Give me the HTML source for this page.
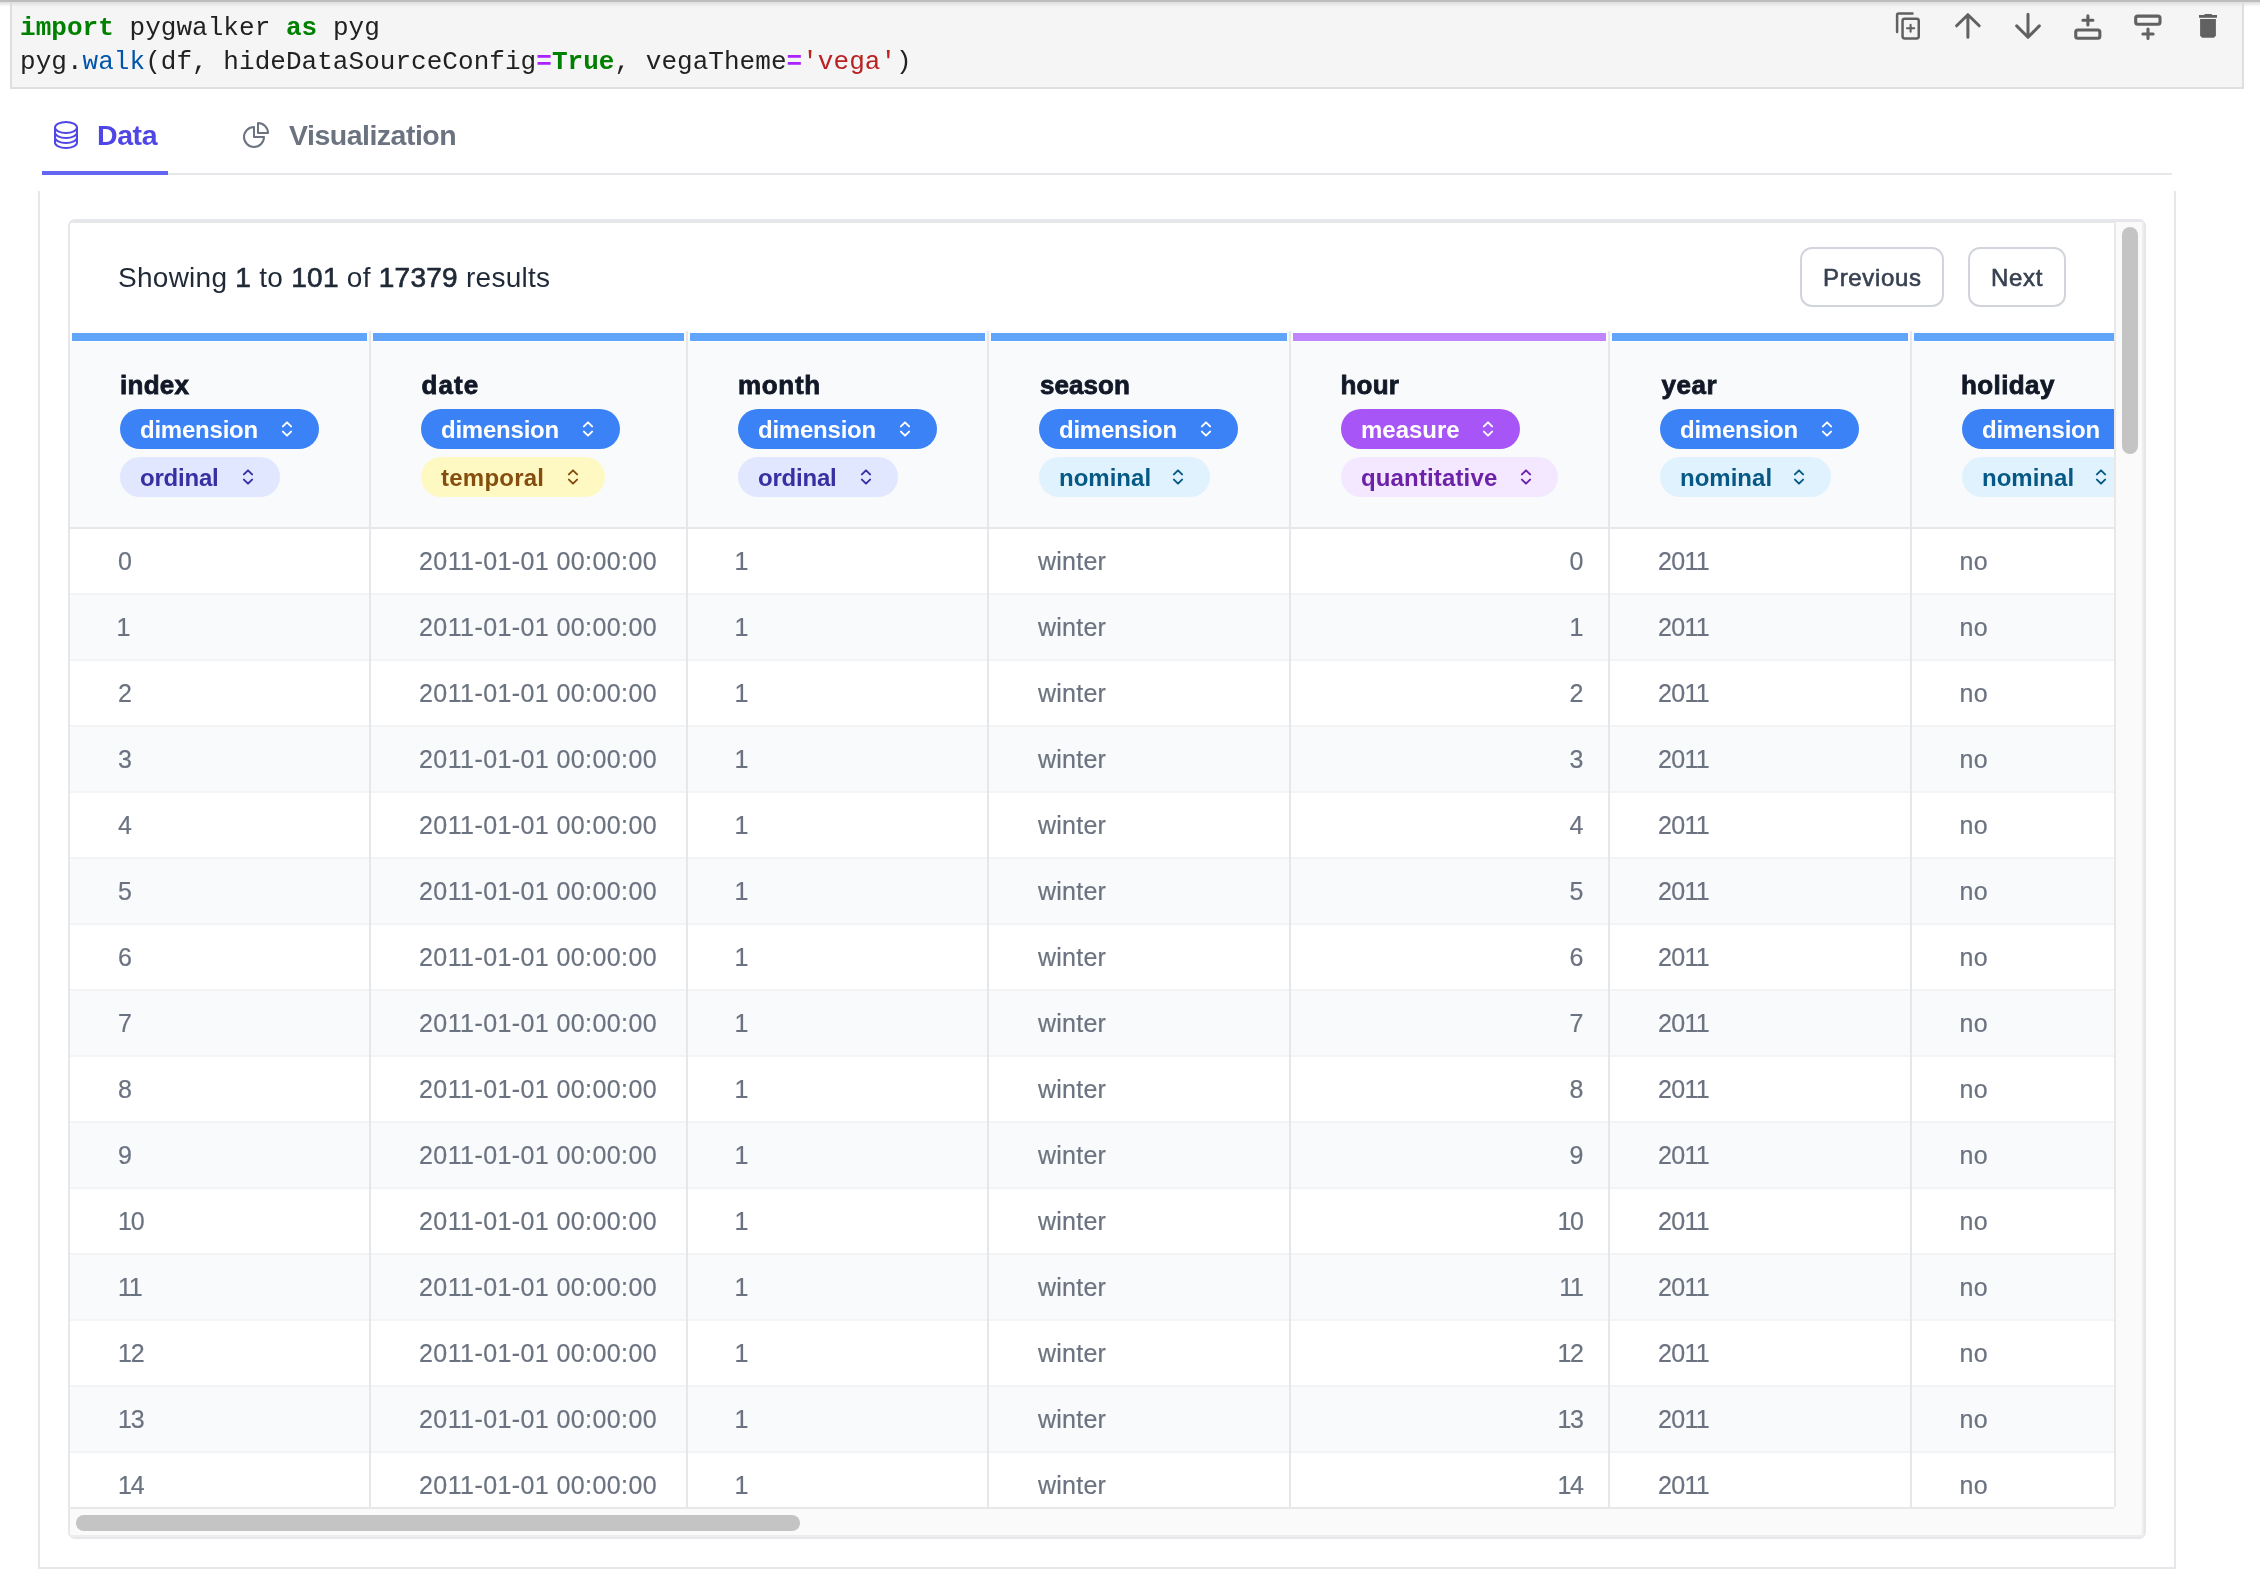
<!DOCTYPE html>
<html><head><meta charset="utf-8"><style>
html,body{margin:0;padding:0;background:#fff;width:2260px;height:1590px;overflow:hidden;position:relative;-webkit-font-smoothing:antialiased}
b{font-weight:normal;-webkit-text-stroke:0.7px #1f2937}
</style></head><body>
<div style="position:absolute;left:0;top:0;width:2260px;height:1590px;will-change:transform"><div style="position:absolute;left:0px;top:0px;width:2260px;height:2px;background:#bdbdbd"></div><div style="position:absolute;left:10px;top:2px;width:2234px;height:87px;background:#f5f5f5;border-left:2px solid #e0dee0;border-right:2px solid #e0dee0;border-bottom:2px solid #e0dee0;box-sizing:border-box"></div><div style="position:absolute;left:0px;top:2px;width:2260px;height:5px;background:linear-gradient(#dedede,rgba(255,255,255,0))"></div><div style="position:absolute;left:20px;top:15.07px;font-family:'Liberation Mono', monospace;font-size:26px;line-height:26px;color:#212121;font-weight:normal;white-space:pre;letter-spacing:0.04px"><span style="color:#008000;font-weight:bold">import</span> pygwalker <span style="color:#008000;font-weight:bold">as</span> pyg</div><div style="position:absolute;left:20px;top:48.77px;font-family:'Liberation Mono', monospace;font-size:26px;line-height:26px;color:#212121;font-weight:normal;white-space:pre;letter-spacing:0.04px">pyg.<span style="color:#0055aa">walk</span>(df, hideDataSourceConfig<span style="color:#aa22ff;font-weight:bold">=</span><span style="color:#008000;font-weight:bold">True</span>, vegaTheme<span style="color:#aa22ff;font-weight:bold">=</span><span style="color:#ba2121">'vega'</span>)</div><svg style="position:absolute;left:1892px;top:10px" width="32" height="32" viewBox="0 0 32 32"><g fill="none" stroke="#616161" stroke-width="2.5" stroke-linecap="round" stroke-linejoin="round"><path d="M5.1 22V5 Q5.1 3.4 6.7 3.4H20.5"/><rect x="10.55" y="8.85" width="16.2" height="19.6" rx="2.2"/><path d="M18.6 14.9v6.8M15 18.2h7.2" stroke-width="2.1"/></g></svg><svg style="position:absolute;left:1952px;top:10px" width="32" height="32" viewBox="0 0 32 32"><g fill="none" stroke="#616161" stroke-width="3" stroke-linecap="round" stroke-linejoin="round"><path d="M15.9 27.2V5.5M4.6 15.8L15.9 4.7l11.3 11.1"/></g></svg><svg style="position:absolute;left:2012px;top:10px" width="32" height="32" viewBox="0 0 32 32"><g fill="none" stroke="#616161" stroke-width="3" stroke-linecap="round" stroke-linejoin="round"><path d="M16 4.3V26.5M4.7 15.9L16 27.3l11.3-11.4"/></g></svg><svg style="position:absolute;left:2072px;top:10px" width="32" height="32" viewBox="0 0 32 32"><g fill="none" stroke="#616161" stroke-width="3.1" stroke-linecap="round"><rect x="3.75" y="20" width="24.1" height="8.2" rx="2"/><path d="M15.9 5.7v9.3M10.9 10.3h10"/></g></svg><svg style="position:absolute;left:2132px;top:10px" width="32" height="32" viewBox="0 0 32 32"><g fill="none" stroke="#616161" stroke-width="3.1" stroke-linecap="round"><rect x="3.7" y="6.1" width="24.3" height="8.2" rx="2"/><path d="M16 19v9.5M10.9 24h10.2"/></g></svg><svg style="position:absolute;left:2192px;top:10px" width="32" height="32" viewBox="0 0 32 32"><g fill="#616161"><rect x="7" y="5" width="18" height="2.8"/><rect x="12.4" y="4" width="7.5" height="1.5" rx="0.5"/><path d="M8.1 9.1h15.8v16.6l-2 2H10.1l-2-2z"/></g></svg><div style="position:absolute;left:42px;top:173px;width:2130px;height:2px;background:#e5e7eb"></div><div style="position:absolute;left:42px;top:171px;width:126px;height:4px;background:#6366f1"></div><svg style="position:absolute;left:50px;top:119px" width="32" height="32" viewBox="0 0 24 24"><path fill="none" stroke="#4f46e5" stroke-width="1.5" stroke-linecap="round" stroke-linejoin="round" d="M20.25 6.375c0 2.278-3.694 4.125-8.25 4.125S3.75 8.653 3.75 6.375m16.5 0c0-2.278-3.694-4.125-8.25-4.125S3.75 4.097 3.75 6.375m16.5 0v11.25c0 2.278-3.694 4.125-8.25 4.125s-8.25-1.847-8.25-4.125V6.375m16.5 0v3.75m-16.5-3.75v3.75m16.5 0v3.75C20.25 16.153 16.556 18 12 18s-8.25-1.847-8.25-4.125v-3.75m16.5 0c0 2.278-3.694 4.125-8.25 4.125s-8.25-1.847-8.25-4.125"/></svg><div style="position:absolute;left:97px;top:121.33px;font-family:'Liberation Sans', sans-serif;font-size:28.5px;line-height:28.5px;color:#4f46e5;font-weight:bold;white-space:pre;letter-spacing:-0.43px">Data</div><svg style="position:absolute;left:240px;top:119px" width="32" height="32" viewBox="0 0 24 24"><g fill="none" stroke="#6b7280" stroke-width="1.5" stroke-linecap="round" stroke-linejoin="round"><path d="M10.5 6a7.5 7.5 0 107.5 7.5h-7.5V6z"/><path d="M13.5 10.5H21A7.5 7.5 0 0013.5 3v7.5z"/></g></svg><div style="position:absolute;left:289px;top:121.33px;font-family:'Liberation Sans', sans-serif;font-size:28.5px;line-height:28.5px;color:#6b7280;font-weight:bold;white-space:pre;letter-spacing:-0.5px">Visualization</div><div style="position:absolute;left:38px;top:191px;width:2138px;height:1378px;border-left:2px solid #e5e7eb;border-right:2px solid #e5e7eb;border-bottom:2px solid #e5e7eb;box-sizing:border-box"></div><div style="position:absolute;left:68px;top:219px;width:2078px;height:1320px;border:2px solid #e5e7eb;border-radius:7px;box-sizing:border-box;background:#fff"></div><div style="position:absolute;left:70px;top:221px;width:2074px;height:2px;background:#e5e7eb"></div><div style="position:absolute;left:118px;top:263.75px;font-family:'Liberation Sans', sans-serif;font-size:28px;line-height:28px;color:#1f2937;font-weight:normal;white-space:pre;letter-spacing:0.27px">Showing <b>1</b> to <b>101</b> of <b>17379</b> results</div><div style="position:absolute;left:1800px;top:247px;width:144px;height:60px;border:2px solid #d1d5db;border-radius:12px;box-sizing:border-box"></div><div style="position:absolute;left:1823px;top:266.07px;font-family:'Liberation Sans', sans-serif;font-size:24px;line-height:24px;color:#374151;font-weight:normal;white-space:pre;letter-spacing:0.66px;-webkit-text-stroke:0.6px #374151">Previous</div><div style="position:absolute;left:1968px;top:247px;width:98px;height:60px;border:2px solid #d1d5db;border-radius:12px;box-sizing:border-box"></div><div style="position:absolute;left:1991px;top:266.07px;font-family:'Liberation Sans', sans-serif;font-size:24px;line-height:24px;color:#374151;font-weight:normal;white-space:pre;letter-spacing:0.65px;-webkit-text-stroke:0.6px #374151">Next</div><div style="position:absolute;left:70px;top:223px;width:2044px;height:1284px;overflow:hidden"><div style="position:absolute;left:0px;top:108px;width:2100px;height:196px;background:#f9fafb"></div><div style="position:absolute;left:0px;top:304px;width:2100px;height:2px;background:#e5e7eb"></div><div style="position:absolute;left:0px;top:306px;width:2100px;height:64px;background:#ffffff"></div><div style="position:absolute;left:0px;top:370px;width:2100px;height:2px;background:#f3f4f6"></div><div style="position:absolute;left:0px;top:372px;width:2100px;height:64px;background:#f9fafb"></div><div style="position:absolute;left:0px;top:436px;width:2100px;height:2px;background:#f3f4f6"></div><div style="position:absolute;left:0px;top:438px;width:2100px;height:64px;background:#ffffff"></div><div style="position:absolute;left:0px;top:502px;width:2100px;height:2px;background:#f3f4f6"></div><div style="position:absolute;left:0px;top:504px;width:2100px;height:64px;background:#f9fafb"></div><div style="position:absolute;left:0px;top:568px;width:2100px;height:2px;background:#f3f4f6"></div><div style="position:absolute;left:0px;top:570px;width:2100px;height:64px;background:#ffffff"></div><div style="position:absolute;left:0px;top:634px;width:2100px;height:2px;background:#f3f4f6"></div><div style="position:absolute;left:0px;top:636px;width:2100px;height:64px;background:#f9fafb"></div><div style="position:absolute;left:0px;top:700px;width:2100px;height:2px;background:#f3f4f6"></div><div style="position:absolute;left:0px;top:702px;width:2100px;height:64px;background:#ffffff"></div><div style="position:absolute;left:0px;top:766px;width:2100px;height:2px;background:#f3f4f6"></div><div style="position:absolute;left:0px;top:768px;width:2100px;height:64px;background:#f9fafb"></div><div style="position:absolute;left:0px;top:832px;width:2100px;height:2px;background:#f3f4f6"></div><div style="position:absolute;left:0px;top:834px;width:2100px;height:64px;background:#ffffff"></div><div style="position:absolute;left:0px;top:898px;width:2100px;height:2px;background:#f3f4f6"></div><div style="position:absolute;left:0px;top:900px;width:2100px;height:64px;background:#f9fafb"></div><div style="position:absolute;left:0px;top:964px;width:2100px;height:2px;background:#f3f4f6"></div><div style="position:absolute;left:0px;top:966px;width:2100px;height:64px;background:#ffffff"></div><div style="position:absolute;left:0px;top:1030px;width:2100px;height:2px;background:#f3f4f6"></div><div style="position:absolute;left:0px;top:1032px;width:2100px;height:64px;background:#f9fafb"></div><div style="position:absolute;left:0px;top:1096px;width:2100px;height:2px;background:#f3f4f6"></div><div style="position:absolute;left:0px;top:1098px;width:2100px;height:64px;background:#ffffff"></div><div style="position:absolute;left:0px;top:1162px;width:2100px;height:2px;background:#f3f4f6"></div><div style="position:absolute;left:0px;top:1164px;width:2100px;height:64px;background:#f9fafb"></div><div style="position:absolute;left:0px;top:1228px;width:2100px;height:2px;background:#f3f4f6"></div><div style="position:absolute;left:0px;top:1230px;width:2100px;height:64px;background:#ffffff"></div><div style="position:absolute;left:0px;top:1294px;width:2100px;height:2px;background:#f3f4f6"></div><div style="position:absolute;left:299px;top:108px;width:2px;height:1200px;background:#e5e7eb"></div><div style="position:absolute;left:616px;top:108px;width:2px;height:1200px;background:#e5e7eb"></div><div style="position:absolute;left:917px;top:108px;width:2px;height:1200px;background:#e5e7eb"></div><div style="position:absolute;left:1219px;top:108px;width:2px;height:1200px;background:#e5e7eb"></div><div style="position:absolute;left:1538px;top:108px;width:2px;height:1200px;background:#e5e7eb"></div><div style="position:absolute;left:1840px;top:108px;width:2px;height:1200px;background:#e5e7eb"></div><div style="position:absolute;left:2px;top:110px;width:295px;height:8px;background:#60a5fa;box-shadow:0 0 0 1px #fff"></div><div style="position:absolute;left:50px;top:149.41px;font-family:'Liberation Sans', sans-serif;font-size:26px;line-height:26px;color:#111827;font-weight:bold;white-space:pre;letter-spacing:0.27px;-webkit-text-stroke:0.8px #111827">index</div><div style="position:absolute;left:50px;top:186px;width:199px;height:40px;background:#3b82f6;border-radius:20px"></div><div style="position:absolute;left:70px;top:195.07px;font-family:'Liberation Sans', sans-serif;font-size:24px;line-height:24px;color:#ffffff;font-weight:bold;white-space:pre;letter-spacing:-0.23px">dimension</div><svg style="position:absolute;left:211px;top:198px" width="12" height="16" viewBox="0 0 12 16"><g fill="none" stroke="#ffffff" stroke-width="1.9" stroke-linecap="round" stroke-linejoin="round"><path d="M1.9 4.4L6 0.3 10.1 4.4M1.9 9.6L6 13.7 10.1 9.6" transform="translate(0,1)"/></g></svg><div style="position:absolute;left:50px;top:234px;width:160px;height:40px;background:#e0e7ff;border-radius:20px"></div><div style="position:absolute;left:70px;top:243.07px;font-family:'Liberation Sans', sans-serif;font-size:24px;line-height:24px;color:#3730a3;font-weight:bold;white-space:pre;letter-spacing:-0.22px">ordinal</div><svg style="position:absolute;left:172px;top:246px" width="12" height="16" viewBox="0 0 12 16"><g fill="none" stroke="#3730a3" stroke-width="1.9" stroke-linecap="round" stroke-linejoin="round"><path d="M1.9 4.4L6 0.3 10.1 4.4M1.9 9.6L6 13.7 10.1 9.6" transform="translate(0,1)"/></g></svg><div style="position:absolute;left:303px;top:110px;width:311px;height:8px;background:#60a5fa;box-shadow:0 0 0 1px #fff"></div><div style="position:absolute;left:351.5px;top:149.41px;font-family:'Liberation Sans', sans-serif;font-size:26px;line-height:26px;color:#111827;font-weight:bold;white-space:pre;letter-spacing:1.1px;-webkit-text-stroke:0.8px #111827">date</div><div style="position:absolute;left:351px;top:186px;width:199px;height:40px;background:#3b82f6;border-radius:20px"></div><div style="position:absolute;left:371px;top:195.07px;font-family:'Liberation Sans', sans-serif;font-size:24px;line-height:24px;color:#ffffff;font-weight:bold;white-space:pre;letter-spacing:-0.23px">dimension</div><svg style="position:absolute;left:512px;top:198px" width="12" height="16" viewBox="0 0 12 16"><g fill="none" stroke="#ffffff" stroke-width="1.9" stroke-linecap="round" stroke-linejoin="round"><path d="M1.9 4.4L6 0.3 10.1 4.4M1.9 9.6L6 13.7 10.1 9.6" transform="translate(0,1)"/></g></svg><div style="position:absolute;left:351px;top:234px;width:184px;height:40px;background:#fef9c3;border-radius:20px"></div><div style="position:absolute;left:371px;top:243.07px;font-family:'Liberation Sans', sans-serif;font-size:24px;line-height:24px;color:#854d0e;font-weight:bold;white-space:pre;letter-spacing:0.24px">temporal</div><svg style="position:absolute;left:497px;top:246px" width="12" height="16" viewBox="0 0 12 16"><g fill="none" stroke="#854d0e" stroke-width="1.9" stroke-linecap="round" stroke-linejoin="round"><path d="M1.9 4.4L6 0.3 10.1 4.4M1.9 9.6L6 13.7 10.1 9.6" transform="translate(0,1)"/></g></svg><div style="position:absolute;left:620px;top:110px;width:295px;height:8px;background:#60a5fa;box-shadow:0 0 0 1px #fff"></div><div style="position:absolute;left:668px;top:149.41px;font-family:'Liberation Sans', sans-serif;font-size:26px;line-height:26px;color:#111827;font-weight:bold;white-space:pre;letter-spacing:0.67px;-webkit-text-stroke:0.8px #111827">month</div><div style="position:absolute;left:668px;top:186px;width:199px;height:40px;background:#3b82f6;border-radius:20px"></div><div style="position:absolute;left:688px;top:195.07px;font-family:'Liberation Sans', sans-serif;font-size:24px;line-height:24px;color:#ffffff;font-weight:bold;white-space:pre;letter-spacing:-0.23px">dimension</div><svg style="position:absolute;left:829px;top:198px" width="12" height="16" viewBox="0 0 12 16"><g fill="none" stroke="#ffffff" stroke-width="1.9" stroke-linecap="round" stroke-linejoin="round"><path d="M1.9 4.4L6 0.3 10.1 4.4M1.9 9.6L6 13.7 10.1 9.6" transform="translate(0,1)"/></g></svg><div style="position:absolute;left:668px;top:234px;width:160px;height:40px;background:#e0e7ff;border-radius:20px"></div><div style="position:absolute;left:688px;top:243.07px;font-family:'Liberation Sans', sans-serif;font-size:24px;line-height:24px;color:#3730a3;font-weight:bold;white-space:pre;letter-spacing:-0.22px">ordinal</div><svg style="position:absolute;left:790px;top:246px" width="12" height="16" viewBox="0 0 12 16"><g fill="none" stroke="#3730a3" stroke-width="1.9" stroke-linecap="round" stroke-linejoin="round"><path d="M1.9 4.4L6 0.3 10.1 4.4M1.9 9.6L6 13.7 10.1 9.6" transform="translate(0,1)"/></g></svg><div style="position:absolute;left:921px;top:110px;width:296px;height:8px;background:#60a5fa;box-shadow:0 0 0 1px #fff"></div><div style="position:absolute;left:970px;top:149.41px;font-family:'Liberation Sans', sans-serif;font-size:26px;line-height:26px;color:#111827;font-weight:bold;white-space:pre;letter-spacing:0.06px;-webkit-text-stroke:0.8px #111827">season</div><div style="position:absolute;left:969px;top:186px;width:199px;height:40px;background:#3b82f6;border-radius:20px"></div><div style="position:absolute;left:989px;top:195.07px;font-family:'Liberation Sans', sans-serif;font-size:24px;line-height:24px;color:#ffffff;font-weight:bold;white-space:pre;letter-spacing:-0.23px">dimension</div><svg style="position:absolute;left:1130px;top:198px" width="12" height="16" viewBox="0 0 12 16"><g fill="none" stroke="#ffffff" stroke-width="1.9" stroke-linecap="round" stroke-linejoin="round"><path d="M1.9 4.4L6 0.3 10.1 4.4M1.9 9.6L6 13.7 10.1 9.6" transform="translate(0,1)"/></g></svg><div style="position:absolute;left:969px;top:234px;width:171px;height:40px;background:#e0f2fe;border-radius:20px"></div><div style="position:absolute;left:989px;top:243.07px;font-family:'Liberation Sans', sans-serif;font-size:24px;line-height:24px;color:#075985;font-weight:bold;white-space:pre;letter-spacing:0.01px">nominal</div><svg style="position:absolute;left:1102px;top:246px" width="12" height="16" viewBox="0 0 12 16"><g fill="none" stroke="#075985" stroke-width="1.9" stroke-linecap="round" stroke-linejoin="round"><path d="M1.9 4.4L6 0.3 10.1 4.4M1.9 9.6L6 13.7 10.1 9.6" transform="translate(0,1)"/></g></svg><div style="position:absolute;left:1223px;top:110px;width:313px;height:8px;background:#c084fc;box-shadow:0 0 0 1px #fff"></div><div style="position:absolute;left:1270.5px;top:149.41px;font-family:'Liberation Sans', sans-serif;font-size:26px;line-height:26px;color:#111827;font-weight:bold;white-space:pre;letter-spacing:0.2px;-webkit-text-stroke:0.8px #111827">hour</div><div style="position:absolute;left:1271px;top:186px;width:179px;height:40px;background:#a855f7;border-radius:20px"></div><div style="position:absolute;left:1291px;top:195.07px;font-family:'Liberation Sans', sans-serif;font-size:24px;line-height:24px;color:#ffffff;font-weight:bold;white-space:pre;letter-spacing:-0.03px">measure</div><svg style="position:absolute;left:1412px;top:198px" width="12" height="16" viewBox="0 0 12 16"><g fill="none" stroke="#ffffff" stroke-width="1.9" stroke-linecap="round" stroke-linejoin="round"><path d="M1.9 4.4L6 0.3 10.1 4.4M1.9 9.6L6 13.7 10.1 9.6" transform="translate(0,1)"/></g></svg><div style="position:absolute;left:1271px;top:234px;width:217px;height:40px;background:#f3e8ff;border-radius:20px"></div><div style="position:absolute;left:1291px;top:243.07px;font-family:'Liberation Sans', sans-serif;font-size:24px;line-height:24px;color:#6b21a8;font-weight:bold;white-space:pre;letter-spacing:0.14px">quantitative</div><svg style="position:absolute;left:1450px;top:246px" width="12" height="16" viewBox="0 0 12 16"><g fill="none" stroke="#6b21a8" stroke-width="1.9" stroke-linecap="round" stroke-linejoin="round"><path d="M1.9 4.4L6 0.3 10.1 4.4M1.9 9.6L6 13.7 10.1 9.6" transform="translate(0,1)"/></g></svg><div style="position:absolute;left:1542px;top:110px;width:296px;height:8px;background:#60a5fa;box-shadow:0 0 0 1px #fff"></div><div style="position:absolute;left:1591.5px;top:149.41px;font-family:'Liberation Sans', sans-serif;font-size:26px;line-height:26px;color:#111827;font-weight:bold;white-space:pre;letter-spacing:0.55px;-webkit-text-stroke:0.8px #111827">year</div><div style="position:absolute;left:1590px;top:186px;width:199px;height:40px;background:#3b82f6;border-radius:20px"></div><div style="position:absolute;left:1610px;top:195.07px;font-family:'Liberation Sans', sans-serif;font-size:24px;line-height:24px;color:#ffffff;font-weight:bold;white-space:pre;letter-spacing:-0.23px">dimension</div><svg style="position:absolute;left:1751px;top:198px" width="12" height="16" viewBox="0 0 12 16"><g fill="none" stroke="#ffffff" stroke-width="1.9" stroke-linecap="round" stroke-linejoin="round"><path d="M1.9 4.4L6 0.3 10.1 4.4M1.9 9.6L6 13.7 10.1 9.6" transform="translate(0,1)"/></g></svg><div style="position:absolute;left:1590px;top:234px;width:171px;height:40px;background:#e0f2fe;border-radius:20px"></div><div style="position:absolute;left:1610px;top:243.07px;font-family:'Liberation Sans', sans-serif;font-size:24px;line-height:24px;color:#075985;font-weight:bold;white-space:pre;letter-spacing:0.01px">nominal</div><svg style="position:absolute;left:1723px;top:246px" width="12" height="16" viewBox="0 0 12 16"><g fill="none" stroke="#075985" stroke-width="1.9" stroke-linecap="round" stroke-linejoin="round"><path d="M1.9 4.4L6 0.3 10.1 4.4M1.9 9.6L6 13.7 10.1 9.6" transform="translate(0,1)"/></g></svg><div style="position:absolute;left:1844px;top:110px;width:484px;height:8px;background:#60a5fa;box-shadow:0 0 0 1px #fff"></div><div style="position:absolute;left:1891px;top:149.41px;font-family:'Liberation Sans', sans-serif;font-size:26px;line-height:26px;color:#111827;font-weight:bold;white-space:pre;letter-spacing:0.4px;-webkit-text-stroke:0.8px #111827">holiday</div><div style="position:absolute;left:1892px;top:186px;width:199px;height:40px;background:#3b82f6;border-radius:20px"></div><div style="position:absolute;left:1912px;top:195.07px;font-family:'Liberation Sans', sans-serif;font-size:24px;line-height:24px;color:#ffffff;font-weight:bold;white-space:pre;letter-spacing:-0.23px">dimension</div><svg style="position:absolute;left:2053px;top:198px" width="12" height="16" viewBox="0 0 12 16"><g fill="none" stroke="#ffffff" stroke-width="1.9" stroke-linecap="round" stroke-linejoin="round"><path d="M1.9 4.4L6 0.3 10.1 4.4M1.9 9.6L6 13.7 10.1 9.6" transform="translate(0,1)"/></g></svg><div style="position:absolute;left:1892px;top:234px;width:171px;height:40px;background:#e0f2fe;border-radius:20px"></div><div style="position:absolute;left:1912px;top:243.07px;font-family:'Liberation Sans', sans-serif;font-size:24px;line-height:24px;color:#075985;font-weight:bold;white-space:pre;letter-spacing:0.01px">nominal</div><svg style="position:absolute;left:2025px;top:246px" width="12" height="16" viewBox="0 0 12 16"><g fill="none" stroke="#075985" stroke-width="1.9" stroke-linecap="round" stroke-linejoin="round"><path d="M1.9 4.4L6 0.3 10.1 4.4M1.9 9.6L6 13.7 10.1 9.6" transform="translate(0,1)"/></g></svg><div style="position:absolute;left:48px;top:326.24px;font-family:'Liberation Sans', sans-serif;font-size:25px;line-height:25px;color:#6b7280;font-weight:normal;white-space:pre;letter-spacing:0px;-webkit-text-stroke:0.2px #6b7280">0</div><div style="position:absolute;left:349px;top:326.24px;font-family:'Liberation Sans', sans-serif;font-size:25px;line-height:25px;color:#6b7280;font-weight:normal;white-space:pre;letter-spacing:0.41px;-webkit-text-stroke:0.2px #6b7280">2011-01-01 00:00:00</div><div style="position:absolute;left:664.5px;top:326.24px;font-family:'Liberation Sans', sans-serif;font-size:25px;line-height:25px;color:#6b7280;font-weight:normal;white-space:pre;letter-spacing:0px;-webkit-text-stroke:0.2px #6b7280">1</div><div style="position:absolute;left:968px;top:326.24px;font-family:'Liberation Sans', sans-serif;font-size:25px;line-height:25px;color:#6b7280;font-weight:normal;white-space:pre;letter-spacing:0.25px;-webkit-text-stroke:0.2px #6b7280">winter</div><div style="position:absolute;left:1588px;top:326.24px;font-family:'Liberation Sans', sans-serif;font-size:25px;line-height:25px;color:#6b7280;font-weight:normal;white-space:pre;letter-spacing:-0.7px;-webkit-text-stroke:0.2px #6b7280">2011</div><div style="position:absolute;left:1889.5px;top:326.24px;font-family:'Liberation Sans', sans-serif;font-size:25px;line-height:25px;color:#6b7280;font-weight:normal;white-space:pre;letter-spacing:0.4px;-webkit-text-stroke:0.2px #6b7280">no</div><div style="position:absolute;left:1221px;width:292.5px;top:325.84px;text-align:right;font-family:'Liberation Sans', sans-serif;font-size:25px;line-height:25px;color:#6b7280;letter-spacing:0px;-webkit-text-stroke:0.2px #6b7280">0</div><div style="position:absolute;left:46.5px;top:392.24px;font-family:'Liberation Sans', sans-serif;font-size:25px;line-height:25px;color:#6b7280;font-weight:normal;white-space:pre;letter-spacing:0px;-webkit-text-stroke:0.2px #6b7280">1</div><div style="position:absolute;left:349px;top:392.24px;font-family:'Liberation Sans', sans-serif;font-size:25px;line-height:25px;color:#6b7280;font-weight:normal;white-space:pre;letter-spacing:0.41px;-webkit-text-stroke:0.2px #6b7280">2011-01-01 00:00:00</div><div style="position:absolute;left:664.5px;top:392.24px;font-family:'Liberation Sans', sans-serif;font-size:25px;line-height:25px;color:#6b7280;font-weight:normal;white-space:pre;letter-spacing:0px;-webkit-text-stroke:0.2px #6b7280">1</div><div style="position:absolute;left:968px;top:392.24px;font-family:'Liberation Sans', sans-serif;font-size:25px;line-height:25px;color:#6b7280;font-weight:normal;white-space:pre;letter-spacing:0.25px;-webkit-text-stroke:0.2px #6b7280">winter</div><div style="position:absolute;left:1588px;top:392.24px;font-family:'Liberation Sans', sans-serif;font-size:25px;line-height:25px;color:#6b7280;font-weight:normal;white-space:pre;letter-spacing:-0.7px;-webkit-text-stroke:0.2px #6b7280">2011</div><div style="position:absolute;left:1889.5px;top:392.24px;font-family:'Liberation Sans', sans-serif;font-size:25px;line-height:25px;color:#6b7280;font-weight:normal;white-space:pre;letter-spacing:0.4px;-webkit-text-stroke:0.2px #6b7280">no</div><div style="position:absolute;left:1221px;width:292.5px;top:391.84px;text-align:right;font-family:'Liberation Sans', sans-serif;font-size:25px;line-height:25px;color:#6b7280;letter-spacing:0px;-webkit-text-stroke:0.2px #6b7280">1</div><div style="position:absolute;left:48px;top:458.24px;font-family:'Liberation Sans', sans-serif;font-size:25px;line-height:25px;color:#6b7280;font-weight:normal;white-space:pre;letter-spacing:0px;-webkit-text-stroke:0.2px #6b7280">2</div><div style="position:absolute;left:349px;top:458.24px;font-family:'Liberation Sans', sans-serif;font-size:25px;line-height:25px;color:#6b7280;font-weight:normal;white-space:pre;letter-spacing:0.41px;-webkit-text-stroke:0.2px #6b7280">2011-01-01 00:00:00</div><div style="position:absolute;left:664.5px;top:458.24px;font-family:'Liberation Sans', sans-serif;font-size:25px;line-height:25px;color:#6b7280;font-weight:normal;white-space:pre;letter-spacing:0px;-webkit-text-stroke:0.2px #6b7280">1</div><div style="position:absolute;left:968px;top:458.24px;font-family:'Liberation Sans', sans-serif;font-size:25px;line-height:25px;color:#6b7280;font-weight:normal;white-space:pre;letter-spacing:0.25px;-webkit-text-stroke:0.2px #6b7280">winter</div><div style="position:absolute;left:1588px;top:458.24px;font-family:'Liberation Sans', sans-serif;font-size:25px;line-height:25px;color:#6b7280;font-weight:normal;white-space:pre;letter-spacing:-0.7px;-webkit-text-stroke:0.2px #6b7280">2011</div><div style="position:absolute;left:1889.5px;top:458.24px;font-family:'Liberation Sans', sans-serif;font-size:25px;line-height:25px;color:#6b7280;font-weight:normal;white-space:pre;letter-spacing:0.4px;-webkit-text-stroke:0.2px #6b7280">no</div><div style="position:absolute;left:1221px;width:292.5px;top:457.84px;text-align:right;font-family:'Liberation Sans', sans-serif;font-size:25px;line-height:25px;color:#6b7280;letter-spacing:0px;-webkit-text-stroke:0.2px #6b7280">2</div><div style="position:absolute;left:48px;top:524.24px;font-family:'Liberation Sans', sans-serif;font-size:25px;line-height:25px;color:#6b7280;font-weight:normal;white-space:pre;letter-spacing:0px;-webkit-text-stroke:0.2px #6b7280">3</div><div style="position:absolute;left:349px;top:524.24px;font-family:'Liberation Sans', sans-serif;font-size:25px;line-height:25px;color:#6b7280;font-weight:normal;white-space:pre;letter-spacing:0.41px;-webkit-text-stroke:0.2px #6b7280">2011-01-01 00:00:00</div><div style="position:absolute;left:664.5px;top:524.24px;font-family:'Liberation Sans', sans-serif;font-size:25px;line-height:25px;color:#6b7280;font-weight:normal;white-space:pre;letter-spacing:0px;-webkit-text-stroke:0.2px #6b7280">1</div><div style="position:absolute;left:968px;top:524.24px;font-family:'Liberation Sans', sans-serif;font-size:25px;line-height:25px;color:#6b7280;font-weight:normal;white-space:pre;letter-spacing:0.25px;-webkit-text-stroke:0.2px #6b7280">winter</div><div style="position:absolute;left:1588px;top:524.24px;font-family:'Liberation Sans', sans-serif;font-size:25px;line-height:25px;color:#6b7280;font-weight:normal;white-space:pre;letter-spacing:-0.7px;-webkit-text-stroke:0.2px #6b7280">2011</div><div style="position:absolute;left:1889.5px;top:524.24px;font-family:'Liberation Sans', sans-serif;font-size:25px;line-height:25px;color:#6b7280;font-weight:normal;white-space:pre;letter-spacing:0.4px;-webkit-text-stroke:0.2px #6b7280">no</div><div style="position:absolute;left:1221px;width:292.5px;top:523.84px;text-align:right;font-family:'Liberation Sans', sans-serif;font-size:25px;line-height:25px;color:#6b7280;letter-spacing:0px;-webkit-text-stroke:0.2px #6b7280">3</div><div style="position:absolute;left:48px;top:590.24px;font-family:'Liberation Sans', sans-serif;font-size:25px;line-height:25px;color:#6b7280;font-weight:normal;white-space:pre;letter-spacing:0px;-webkit-text-stroke:0.2px #6b7280">4</div><div style="position:absolute;left:349px;top:590.24px;font-family:'Liberation Sans', sans-serif;font-size:25px;line-height:25px;color:#6b7280;font-weight:normal;white-space:pre;letter-spacing:0.41px;-webkit-text-stroke:0.2px #6b7280">2011-01-01 00:00:00</div><div style="position:absolute;left:664.5px;top:590.24px;font-family:'Liberation Sans', sans-serif;font-size:25px;line-height:25px;color:#6b7280;font-weight:normal;white-space:pre;letter-spacing:0px;-webkit-text-stroke:0.2px #6b7280">1</div><div style="position:absolute;left:968px;top:590.24px;font-family:'Liberation Sans', sans-serif;font-size:25px;line-height:25px;color:#6b7280;font-weight:normal;white-space:pre;letter-spacing:0.25px;-webkit-text-stroke:0.2px #6b7280">winter</div><div style="position:absolute;left:1588px;top:590.24px;font-family:'Liberation Sans', sans-serif;font-size:25px;line-height:25px;color:#6b7280;font-weight:normal;white-space:pre;letter-spacing:-0.7px;-webkit-text-stroke:0.2px #6b7280">2011</div><div style="position:absolute;left:1889.5px;top:590.24px;font-family:'Liberation Sans', sans-serif;font-size:25px;line-height:25px;color:#6b7280;font-weight:normal;white-space:pre;letter-spacing:0.4px;-webkit-text-stroke:0.2px #6b7280">no</div><div style="position:absolute;left:1221px;width:292.5px;top:589.84px;text-align:right;font-family:'Liberation Sans', sans-serif;font-size:25px;line-height:25px;color:#6b7280;letter-spacing:0px;-webkit-text-stroke:0.2px #6b7280">4</div><div style="position:absolute;left:48px;top:656.24px;font-family:'Liberation Sans', sans-serif;font-size:25px;line-height:25px;color:#6b7280;font-weight:normal;white-space:pre;letter-spacing:0px;-webkit-text-stroke:0.2px #6b7280">5</div><div style="position:absolute;left:349px;top:656.24px;font-family:'Liberation Sans', sans-serif;font-size:25px;line-height:25px;color:#6b7280;font-weight:normal;white-space:pre;letter-spacing:0.41px;-webkit-text-stroke:0.2px #6b7280">2011-01-01 00:00:00</div><div style="position:absolute;left:664.5px;top:656.24px;font-family:'Liberation Sans', sans-serif;font-size:25px;line-height:25px;color:#6b7280;font-weight:normal;white-space:pre;letter-spacing:0px;-webkit-text-stroke:0.2px #6b7280">1</div><div style="position:absolute;left:968px;top:656.24px;font-family:'Liberation Sans', sans-serif;font-size:25px;line-height:25px;color:#6b7280;font-weight:normal;white-space:pre;letter-spacing:0.25px;-webkit-text-stroke:0.2px #6b7280">winter</div><div style="position:absolute;left:1588px;top:656.24px;font-family:'Liberation Sans', sans-serif;font-size:25px;line-height:25px;color:#6b7280;font-weight:normal;white-space:pre;letter-spacing:-0.7px;-webkit-text-stroke:0.2px #6b7280">2011</div><div style="position:absolute;left:1889.5px;top:656.24px;font-family:'Liberation Sans', sans-serif;font-size:25px;line-height:25px;color:#6b7280;font-weight:normal;white-space:pre;letter-spacing:0.4px;-webkit-text-stroke:0.2px #6b7280">no</div><div style="position:absolute;left:1221px;width:292.5px;top:655.84px;text-align:right;font-family:'Liberation Sans', sans-serif;font-size:25px;line-height:25px;color:#6b7280;letter-spacing:0px;-webkit-text-stroke:0.2px #6b7280">5</div><div style="position:absolute;left:48px;top:722.24px;font-family:'Liberation Sans', sans-serif;font-size:25px;line-height:25px;color:#6b7280;font-weight:normal;white-space:pre;letter-spacing:0px;-webkit-text-stroke:0.2px #6b7280">6</div><div style="position:absolute;left:349px;top:722.24px;font-family:'Liberation Sans', sans-serif;font-size:25px;line-height:25px;color:#6b7280;font-weight:normal;white-space:pre;letter-spacing:0.41px;-webkit-text-stroke:0.2px #6b7280">2011-01-01 00:00:00</div><div style="position:absolute;left:664.5px;top:722.24px;font-family:'Liberation Sans', sans-serif;font-size:25px;line-height:25px;color:#6b7280;font-weight:normal;white-space:pre;letter-spacing:0px;-webkit-text-stroke:0.2px #6b7280">1</div><div style="position:absolute;left:968px;top:722.24px;font-family:'Liberation Sans', sans-serif;font-size:25px;line-height:25px;color:#6b7280;font-weight:normal;white-space:pre;letter-spacing:0.25px;-webkit-text-stroke:0.2px #6b7280">winter</div><div style="position:absolute;left:1588px;top:722.24px;font-family:'Liberation Sans', sans-serif;font-size:25px;line-height:25px;color:#6b7280;font-weight:normal;white-space:pre;letter-spacing:-0.7px;-webkit-text-stroke:0.2px #6b7280">2011</div><div style="position:absolute;left:1889.5px;top:722.24px;font-family:'Liberation Sans', sans-serif;font-size:25px;line-height:25px;color:#6b7280;font-weight:normal;white-space:pre;letter-spacing:0.4px;-webkit-text-stroke:0.2px #6b7280">no</div><div style="position:absolute;left:1221px;width:292.5px;top:721.84px;text-align:right;font-family:'Liberation Sans', sans-serif;font-size:25px;line-height:25px;color:#6b7280;letter-spacing:0px;-webkit-text-stroke:0.2px #6b7280">6</div><div style="position:absolute;left:48px;top:788.24px;font-family:'Liberation Sans', sans-serif;font-size:25px;line-height:25px;color:#6b7280;font-weight:normal;white-space:pre;letter-spacing:0px;-webkit-text-stroke:0.2px #6b7280">7</div><div style="position:absolute;left:349px;top:788.24px;font-family:'Liberation Sans', sans-serif;font-size:25px;line-height:25px;color:#6b7280;font-weight:normal;white-space:pre;letter-spacing:0.41px;-webkit-text-stroke:0.2px #6b7280">2011-01-01 00:00:00</div><div style="position:absolute;left:664.5px;top:788.24px;font-family:'Liberation Sans', sans-serif;font-size:25px;line-height:25px;color:#6b7280;font-weight:normal;white-space:pre;letter-spacing:0px;-webkit-text-stroke:0.2px #6b7280">1</div><div style="position:absolute;left:968px;top:788.24px;font-family:'Liberation Sans', sans-serif;font-size:25px;line-height:25px;color:#6b7280;font-weight:normal;white-space:pre;letter-spacing:0.25px;-webkit-text-stroke:0.2px #6b7280">winter</div><div style="position:absolute;left:1588px;top:788.24px;font-family:'Liberation Sans', sans-serif;font-size:25px;line-height:25px;color:#6b7280;font-weight:normal;white-space:pre;letter-spacing:-0.7px;-webkit-text-stroke:0.2px #6b7280">2011</div><div style="position:absolute;left:1889.5px;top:788.24px;font-family:'Liberation Sans', sans-serif;font-size:25px;line-height:25px;color:#6b7280;font-weight:normal;white-space:pre;letter-spacing:0.4px;-webkit-text-stroke:0.2px #6b7280">no</div><div style="position:absolute;left:1221px;width:292.5px;top:787.84px;text-align:right;font-family:'Liberation Sans', sans-serif;font-size:25px;line-height:25px;color:#6b7280;letter-spacing:0px;-webkit-text-stroke:0.2px #6b7280">7</div><div style="position:absolute;left:48px;top:854.24px;font-family:'Liberation Sans', sans-serif;font-size:25px;line-height:25px;color:#6b7280;font-weight:normal;white-space:pre;letter-spacing:0px;-webkit-text-stroke:0.2px #6b7280">8</div><div style="position:absolute;left:349px;top:854.24px;font-family:'Liberation Sans', sans-serif;font-size:25px;line-height:25px;color:#6b7280;font-weight:normal;white-space:pre;letter-spacing:0.41px;-webkit-text-stroke:0.2px #6b7280">2011-01-01 00:00:00</div><div style="position:absolute;left:664.5px;top:854.24px;font-family:'Liberation Sans', sans-serif;font-size:25px;line-height:25px;color:#6b7280;font-weight:normal;white-space:pre;letter-spacing:0px;-webkit-text-stroke:0.2px #6b7280">1</div><div style="position:absolute;left:968px;top:854.24px;font-family:'Liberation Sans', sans-serif;font-size:25px;line-height:25px;color:#6b7280;font-weight:normal;white-space:pre;letter-spacing:0.25px;-webkit-text-stroke:0.2px #6b7280">winter</div><div style="position:absolute;left:1588px;top:854.24px;font-family:'Liberation Sans', sans-serif;font-size:25px;line-height:25px;color:#6b7280;font-weight:normal;white-space:pre;letter-spacing:-0.7px;-webkit-text-stroke:0.2px #6b7280">2011</div><div style="position:absolute;left:1889.5px;top:854.24px;font-family:'Liberation Sans', sans-serif;font-size:25px;line-height:25px;color:#6b7280;font-weight:normal;white-space:pre;letter-spacing:0.4px;-webkit-text-stroke:0.2px #6b7280">no</div><div style="position:absolute;left:1221px;width:292.5px;top:853.84px;text-align:right;font-family:'Liberation Sans', sans-serif;font-size:25px;line-height:25px;color:#6b7280;letter-spacing:0px;-webkit-text-stroke:0.2px #6b7280">8</div><div style="position:absolute;left:48px;top:920.24px;font-family:'Liberation Sans', sans-serif;font-size:25px;line-height:25px;color:#6b7280;font-weight:normal;white-space:pre;letter-spacing:0px;-webkit-text-stroke:0.2px #6b7280">9</div><div style="position:absolute;left:349px;top:920.24px;font-family:'Liberation Sans', sans-serif;font-size:25px;line-height:25px;color:#6b7280;font-weight:normal;white-space:pre;letter-spacing:0.41px;-webkit-text-stroke:0.2px #6b7280">2011-01-01 00:00:00</div><div style="position:absolute;left:664.5px;top:920.24px;font-family:'Liberation Sans', sans-serif;font-size:25px;line-height:25px;color:#6b7280;font-weight:normal;white-space:pre;letter-spacing:0px;-webkit-text-stroke:0.2px #6b7280">1</div><div style="position:absolute;left:968px;top:920.24px;font-family:'Liberation Sans', sans-serif;font-size:25px;line-height:25px;color:#6b7280;font-weight:normal;white-space:pre;letter-spacing:0.25px;-webkit-text-stroke:0.2px #6b7280">winter</div><div style="position:absolute;left:1588px;top:920.24px;font-family:'Liberation Sans', sans-serif;font-size:25px;line-height:25px;color:#6b7280;font-weight:normal;white-space:pre;letter-spacing:-0.7px;-webkit-text-stroke:0.2px #6b7280">2011</div><div style="position:absolute;left:1889.5px;top:920.24px;font-family:'Liberation Sans', sans-serif;font-size:25px;line-height:25px;color:#6b7280;font-weight:normal;white-space:pre;letter-spacing:0.4px;-webkit-text-stroke:0.2px #6b7280">no</div><div style="position:absolute;left:1221px;width:292.5px;top:919.84px;text-align:right;font-family:'Liberation Sans', sans-serif;font-size:25px;line-height:25px;color:#6b7280;letter-spacing:0px;-webkit-text-stroke:0.2px #6b7280">9</div><div style="position:absolute;left:48px;top:986.24px;font-family:'Liberation Sans', sans-serif;font-size:25px;line-height:25px;color:#6b7280;font-weight:normal;white-space:pre;letter-spacing:-1.2px;-webkit-text-stroke:0.2px #6b7280">10</div><div style="position:absolute;left:349px;top:986.24px;font-family:'Liberation Sans', sans-serif;font-size:25px;line-height:25px;color:#6b7280;font-weight:normal;white-space:pre;letter-spacing:0.41px;-webkit-text-stroke:0.2px #6b7280">2011-01-01 00:00:00</div><div style="position:absolute;left:664.5px;top:986.24px;font-family:'Liberation Sans', sans-serif;font-size:25px;line-height:25px;color:#6b7280;font-weight:normal;white-space:pre;letter-spacing:0px;-webkit-text-stroke:0.2px #6b7280">1</div><div style="position:absolute;left:968px;top:986.24px;font-family:'Liberation Sans', sans-serif;font-size:25px;line-height:25px;color:#6b7280;font-weight:normal;white-space:pre;letter-spacing:0.25px;-webkit-text-stroke:0.2px #6b7280">winter</div><div style="position:absolute;left:1588px;top:986.24px;font-family:'Liberation Sans', sans-serif;font-size:25px;line-height:25px;color:#6b7280;font-weight:normal;white-space:pre;letter-spacing:-0.7px;-webkit-text-stroke:0.2px #6b7280">2011</div><div style="position:absolute;left:1889.5px;top:986.24px;font-family:'Liberation Sans', sans-serif;font-size:25px;line-height:25px;color:#6b7280;font-weight:normal;white-space:pre;letter-spacing:0.4px;-webkit-text-stroke:0.2px #6b7280">no</div><div style="position:absolute;left:1221px;width:291.79999999999995px;top:985.84px;text-align:right;font-family:'Liberation Sans', sans-serif;font-size:25px;line-height:25px;color:#6b7280;letter-spacing:-1.2px;-webkit-text-stroke:0.2px #6b7280">10</div><div style="position:absolute;left:48px;top:1052.24px;font-family:'Liberation Sans', sans-serif;font-size:25px;line-height:25px;color:#6b7280;font-weight:normal;white-space:pre;letter-spacing:-1.2px;-webkit-text-stroke:0.2px #6b7280">11</div><div style="position:absolute;left:349px;top:1052.24px;font-family:'Liberation Sans', sans-serif;font-size:25px;line-height:25px;color:#6b7280;font-weight:normal;white-space:pre;letter-spacing:0.41px;-webkit-text-stroke:0.2px #6b7280">2011-01-01 00:00:00</div><div style="position:absolute;left:664.5px;top:1052.24px;font-family:'Liberation Sans', sans-serif;font-size:25px;line-height:25px;color:#6b7280;font-weight:normal;white-space:pre;letter-spacing:0px;-webkit-text-stroke:0.2px #6b7280">1</div><div style="position:absolute;left:968px;top:1052.24px;font-family:'Liberation Sans', sans-serif;font-size:25px;line-height:25px;color:#6b7280;font-weight:normal;white-space:pre;letter-spacing:0.25px;-webkit-text-stroke:0.2px #6b7280">winter</div><div style="position:absolute;left:1588px;top:1052.24px;font-family:'Liberation Sans', sans-serif;font-size:25px;line-height:25px;color:#6b7280;font-weight:normal;white-space:pre;letter-spacing:-0.7px;-webkit-text-stroke:0.2px #6b7280">2011</div><div style="position:absolute;left:1889.5px;top:1052.24px;font-family:'Liberation Sans', sans-serif;font-size:25px;line-height:25px;color:#6b7280;font-weight:normal;white-space:pre;letter-spacing:0.4px;-webkit-text-stroke:0.2px #6b7280">no</div><div style="position:absolute;left:1221px;width:291.79999999999995px;top:1051.84px;text-align:right;font-family:'Liberation Sans', sans-serif;font-size:25px;line-height:25px;color:#6b7280;letter-spacing:-1.2px;-webkit-text-stroke:0.2px #6b7280">11</div><div style="position:absolute;left:48px;top:1118.24px;font-family:'Liberation Sans', sans-serif;font-size:25px;line-height:25px;color:#6b7280;font-weight:normal;white-space:pre;letter-spacing:-1.2px;-webkit-text-stroke:0.2px #6b7280">12</div><div style="position:absolute;left:349px;top:1118.24px;font-family:'Liberation Sans', sans-serif;font-size:25px;line-height:25px;color:#6b7280;font-weight:normal;white-space:pre;letter-spacing:0.41px;-webkit-text-stroke:0.2px #6b7280">2011-01-01 00:00:00</div><div style="position:absolute;left:664.5px;top:1118.24px;font-family:'Liberation Sans', sans-serif;font-size:25px;line-height:25px;color:#6b7280;font-weight:normal;white-space:pre;letter-spacing:0px;-webkit-text-stroke:0.2px #6b7280">1</div><div style="position:absolute;left:968px;top:1118.24px;font-family:'Liberation Sans', sans-serif;font-size:25px;line-height:25px;color:#6b7280;font-weight:normal;white-space:pre;letter-spacing:0.25px;-webkit-text-stroke:0.2px #6b7280">winter</div><div style="position:absolute;left:1588px;top:1118.24px;font-family:'Liberation Sans', sans-serif;font-size:25px;line-height:25px;color:#6b7280;font-weight:normal;white-space:pre;letter-spacing:-0.7px;-webkit-text-stroke:0.2px #6b7280">2011</div><div style="position:absolute;left:1889.5px;top:1118.24px;font-family:'Liberation Sans', sans-serif;font-size:25px;line-height:25px;color:#6b7280;font-weight:normal;white-space:pre;letter-spacing:0.4px;-webkit-text-stroke:0.2px #6b7280">no</div><div style="position:absolute;left:1221px;width:291.79999999999995px;top:1117.84px;text-align:right;font-family:'Liberation Sans', sans-serif;font-size:25px;line-height:25px;color:#6b7280;letter-spacing:-1.2px;-webkit-text-stroke:0.2px #6b7280">12</div><div style="position:absolute;left:48px;top:1184.24px;font-family:'Liberation Sans', sans-serif;font-size:25px;line-height:25px;color:#6b7280;font-weight:normal;white-space:pre;letter-spacing:-1.2px;-webkit-text-stroke:0.2px #6b7280">13</div><div style="position:absolute;left:349px;top:1184.24px;font-family:'Liberation Sans', sans-serif;font-size:25px;line-height:25px;color:#6b7280;font-weight:normal;white-space:pre;letter-spacing:0.41px;-webkit-text-stroke:0.2px #6b7280">2011-01-01 00:00:00</div><div style="position:absolute;left:664.5px;top:1184.24px;font-family:'Liberation Sans', sans-serif;font-size:25px;line-height:25px;color:#6b7280;font-weight:normal;white-space:pre;letter-spacing:0px;-webkit-text-stroke:0.2px #6b7280">1</div><div style="position:absolute;left:968px;top:1184.24px;font-family:'Liberation Sans', sans-serif;font-size:25px;line-height:25px;color:#6b7280;font-weight:normal;white-space:pre;letter-spacing:0.25px;-webkit-text-stroke:0.2px #6b7280">winter</div><div style="position:absolute;left:1588px;top:1184.24px;font-family:'Liberation Sans', sans-serif;font-size:25px;line-height:25px;color:#6b7280;font-weight:normal;white-space:pre;letter-spacing:-0.7px;-webkit-text-stroke:0.2px #6b7280">2011</div><div style="position:absolute;left:1889.5px;top:1184.24px;font-family:'Liberation Sans', sans-serif;font-size:25px;line-height:25px;color:#6b7280;font-weight:normal;white-space:pre;letter-spacing:0.4px;-webkit-text-stroke:0.2px #6b7280">no</div><div style="position:absolute;left:1221px;width:291.79999999999995px;top:1183.84px;text-align:right;font-family:'Liberation Sans', sans-serif;font-size:25px;line-height:25px;color:#6b7280;letter-spacing:-1.2px;-webkit-text-stroke:0.2px #6b7280">13</div><div style="position:absolute;left:48px;top:1250.24px;font-family:'Liberation Sans', sans-serif;font-size:25px;line-height:25px;color:#6b7280;font-weight:normal;white-space:pre;letter-spacing:-1.2px;-webkit-text-stroke:0.2px #6b7280">14</div><div style="position:absolute;left:349px;top:1250.24px;font-family:'Liberation Sans', sans-serif;font-size:25px;line-height:25px;color:#6b7280;font-weight:normal;white-space:pre;letter-spacing:0.41px;-webkit-text-stroke:0.2px #6b7280">2011-01-01 00:00:00</div><div style="position:absolute;left:664.5px;top:1250.24px;font-family:'Liberation Sans', sans-serif;font-size:25px;line-height:25px;color:#6b7280;font-weight:normal;white-space:pre;letter-spacing:0px;-webkit-text-stroke:0.2px #6b7280">1</div><div style="position:absolute;left:968px;top:1250.24px;font-family:'Liberation Sans', sans-serif;font-size:25px;line-height:25px;color:#6b7280;font-weight:normal;white-space:pre;letter-spacing:0.25px;-webkit-text-stroke:0.2px #6b7280">winter</div><div style="position:absolute;left:1588px;top:1250.24px;font-family:'Liberation Sans', sans-serif;font-size:25px;line-height:25px;color:#6b7280;font-weight:normal;white-space:pre;letter-spacing:-0.7px;-webkit-text-stroke:0.2px #6b7280">2011</div><div style="position:absolute;left:1889.5px;top:1250.24px;font-family:'Liberation Sans', sans-serif;font-size:25px;line-height:25px;color:#6b7280;font-weight:normal;white-space:pre;letter-spacing:0.4px;-webkit-text-stroke:0.2px #6b7280">no</div><div style="position:absolute;left:1221px;width:291.79999999999995px;top:1249.84px;text-align:right;font-family:'Liberation Sans', sans-serif;font-size:25px;line-height:25px;color:#6b7280;letter-spacing:-1.2px;-webkit-text-stroke:0.2px #6b7280">14</div></div><div style="position:absolute;left:2114px;top:222px;width:30px;height:1285px;background:#fafafa;border-left:2px solid #e8e8e8;border-right:2px solid #ededed;box-sizing:border-box"></div><div style="position:absolute;left:2122px;top:227px;width:16px;height:227px;background:#c4c4c4;border-radius:8px"></div><div style="position:absolute;left:70px;top:1507px;width:2044px;height:30px;background:#fafafa;border-top:2px solid #e8e8e8;border-bottom:2px solid #ededed;box-sizing:border-box"></div><div style="position:absolute;left:76px;top:1515px;width:724px;height:16px;background:#c4c4c4;border-radius:8px"></div><div style="position:absolute;left:2114px;top:1507px;width:30px;height:30px;background:#fafafa;border-right:2px solid #ededed;border-bottom:2px solid #ededed;box-sizing:border-box"></div></div>
</body></html>
